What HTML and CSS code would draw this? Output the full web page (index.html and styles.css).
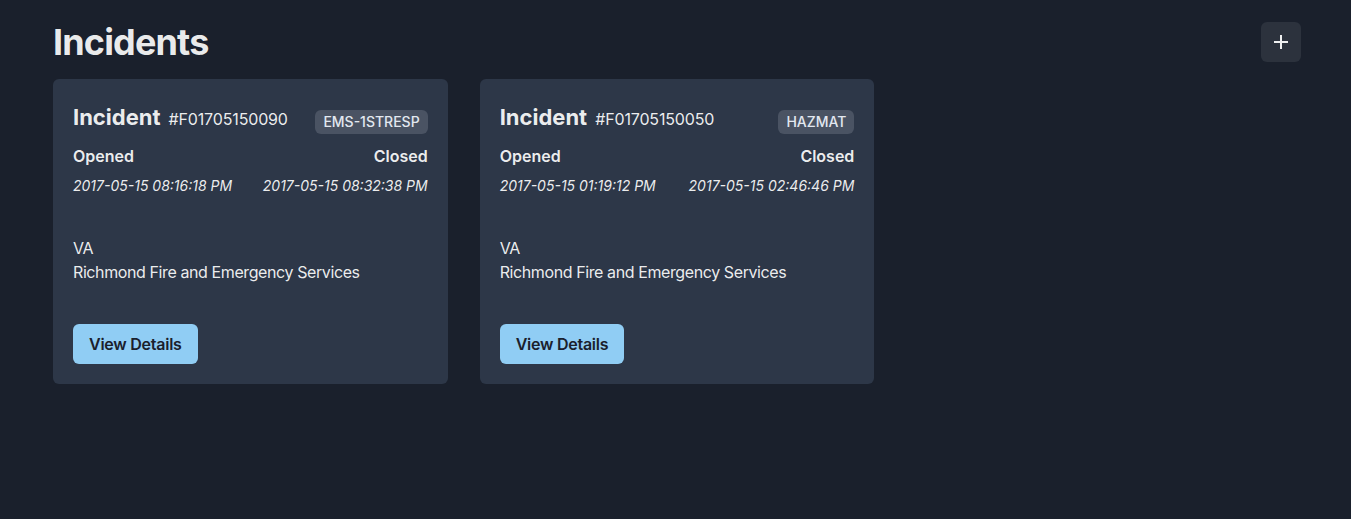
FILE: index.html
```html
<!DOCTYPE html>
<html lang="en">
<head>
<meta charset="utf-8">
<title>Incidents</title>
<link rel="stylesheet" href="styles.css">
</head>
<body>
<main class="page">
  <header class="page-header">
    <h1 class="page-title">Incidents</h1>
    <button class="icon-btn" aria-label="Add incident">
      <svg width="16" height="16" viewBox="0 0 16 16" aria-hidden="true"><path d="M8 1v14M1 8h14" stroke="currentColor" stroke-width="2" fill="none"/></svg>
    </button>
  </header>
  <section class="grid">
    <article class="card">
      <div class="card-head">
        <h2 class="card-title">Incident<span class="card-id">#F01705150090</span></h2>
        <span class="tag">EMS-1STRESP</span>
      </div>
      <div class="row labels"><span>Opened</span><span>Closed</span></div>
      <div class="row dates"><span>2017-05-15 08:16:18 PM</span><span>2017-05-15 08:32:38 PM</span></div>
      <div class="address"><div>VA</div><div>Richmond Fire and Emergency Services</div></div>
      <div class="actions"><button class="btn">View Details</button></div>
    </article>
    <article class="card">
      <div class="card-head">
        <h2 class="card-title">Incident<span class="card-id">#F01705150050</span></h2>
        <span class="tag">HAZMAT</span>
      </div>
      <div class="row labels"><span>Opened</span><span>Closed</span></div>
      <div class="row dates"><span>2017-05-15 01:19:12 PM</span><span>2017-05-15 02:46:46 PM</span></div>
      <div class="address"><div>VA</div><div>Richmond Fire and Emergency Services</div></div>
      <div class="actions"><button class="btn">View Details</button></div>
    </article>
  </section>
</main>
</body>
</html>
```
FILE: styles.css
```css
* { box-sizing: border-box; }
html, body { margin: 0; padding: 0; }
body {
  background: #1a202c;
  color: rgba(255,255,255,0.92);
  font-family: Inter, "Noto Sans", "Liberation Sans", sans-serif;
  font-size: 16px;
  line-height: 24px;
  min-height: 519px;
}
.page {
  width: 1248px;
  margin: 0 0 0 53px;
  padding-top: 21px;
}
.page-header {
  display: flex;
  align-items: center;
  justify-content: space-between;
  height: 43px;
}
.page-title {
  margin: 0;
  font-size: 36px;
  line-height: 43px;
  font-weight: 700;
  letter-spacing: -0.85px;
}
.icon-btn {
  width: 40px;
  height: 40px;
  margin-top: -1px;
  border: 0;
  border-radius: 6px;
  background: #2c323d;
  color: rgba(255,255,255,0.92);
  display: flex;
  align-items: center;
  justify-content: center;
  padding: 0;
}
.grid {
  margin-top: 15px;
  display: grid;
  grid-template-columns: repeat(3, 1fr);
  gap: 32px;
}
.card {
  background: #2d3748;
  border-radius: 6px;
  padding: 20px;
  height: 305px;
  display: flex;
  flex-direction: column;
}
.card-head {
  display: flex;
  justify-content: space-between;
  align-items: flex-start;
  height: 36px;
}
.card-title {
  margin: 0;
  font-size: 22px;
  line-height: 36px;
  font-weight: 700;
}
.card-id {
  font-size: 16px;
  font-weight: 400;
  margin-left: 8px;
  letter-spacing: -0.15px;
}
.tag {
  margin-top: 11px;
  height: 24px;
  padding: 0 8px;
  border-radius: 6px;
  background: #4a5363;
  color: #e2e8f0;
  font-size: 14px;
  font-weight: 500;
  line-height: 24px;
}
.row {
  display: flex;
  justify-content: space-between;
}
.labels {
  margin-top: 9px;
  font-weight: 600;
}
.dates {
  margin-top: 8px;
  font-size: 14px;
  line-height: 20px;
  font-style: italic;
}
.address {
  margin-top: 40px;
  letter-spacing: -0.4px;
}
.actions {
  margin-top: 40px;
}
.btn {
  height: 40px;
  padding: 0 16px;
  border: 0;
  border-radius: 6px;
  background: #90cdf4;
  color: #1a202c;
  font-family: inherit;
  font-size: 16px;
  font-weight: 600;
  letter-spacing: -0.25px;
}
```
